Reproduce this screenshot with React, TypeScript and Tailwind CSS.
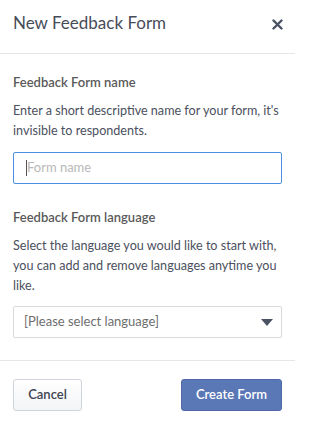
export default function App() {
  return (
    <div className="w-[295px] h-[421px] bg-white font-['Lato','Open_Sans',sans-serif] text-[#4b505e]">
      <header className="flex h-[54px] items-start justify-between border-b border-[#e6e6e6] pl-[13px] pr-[12px] pt-[13px]">
        <h1 className="text-[17px] leading-[20px] text-[#474c59]">New Feedback Form</h1>
        <button className="mt-[6px] text-[#4b5263]">
          <svg width="11" height="11" viewBox="0 0 11 11">
            <path d="M1.5 1.5l8 8M9.5 1.5l-8 8" stroke="currentColor" strokeWidth="2.4" strokeLinecap="round" />
          </svg>
        </button>
      </header>

      <div className="px-[13px] pt-[19px]">
        <p className="text-[13px] font-semibold text-[#5a5a5a] leading-[18px]">Feedback Form name</p>
        <p className="mt-[10px] text-[12.6px] leading-[20px]">
          Enter a short descriptive name for your form, it&apos;s invisible to respondents.
        </p>
        <div className="mt-[11px] flex h-[32px] items-center rounded-[2px] border border-[#4a90e2] px-[12px]">
          <span className="h-[16px] w-px bg-[#555]" />
          <span className="text-[13px] text-[#b8b8b8]">Form name</span>
        </div>

        <p className="mt-[24px] text-[13px] font-semibold text-[#5a5a5a] leading-[18px]">Feedback Form language</p>
        <p className="mt-[10px] text-[12.6px] leading-[20px]">
          Select the language you would like to start with, you can add and remove languages anytime you like.
        </p>
        <div className="mt-[10px] flex h-[32px] items-center justify-between rounded-[2px] border border-[#d9d9d9] pl-[10px] pr-[8px]">
          <span className="text-[13px] text-[#6e6e6e]">[Please select language]</span>
          <svg width="12" height="7" viewBox="0 0 12 7">
            <path d="M0 0h12L6 7z" fill="#4b5263" />
          </svg>
        </div>
      </div>

      <div className="mt-[22px] flex items-center justify-between border-t border-[#e6e6e6] px-[13px] pt-[18px]">
        <button className="h-[32px] w-[69px] rounded-[3px] border border-[#cfd3dc] bg-gradient-to-b from-white to-[#f3f4f7] text-[13px] font-semibold text-[#3e4350]">
          Cancel
        </button>
        <button className="h-[32px] w-[101px] rounded-[3px] border border-[#4e69a8] bg-[#5a77b6] text-[13px] font-semibold text-white">
          Create Form
        </button>
      </div>
    </div>
  );
}
